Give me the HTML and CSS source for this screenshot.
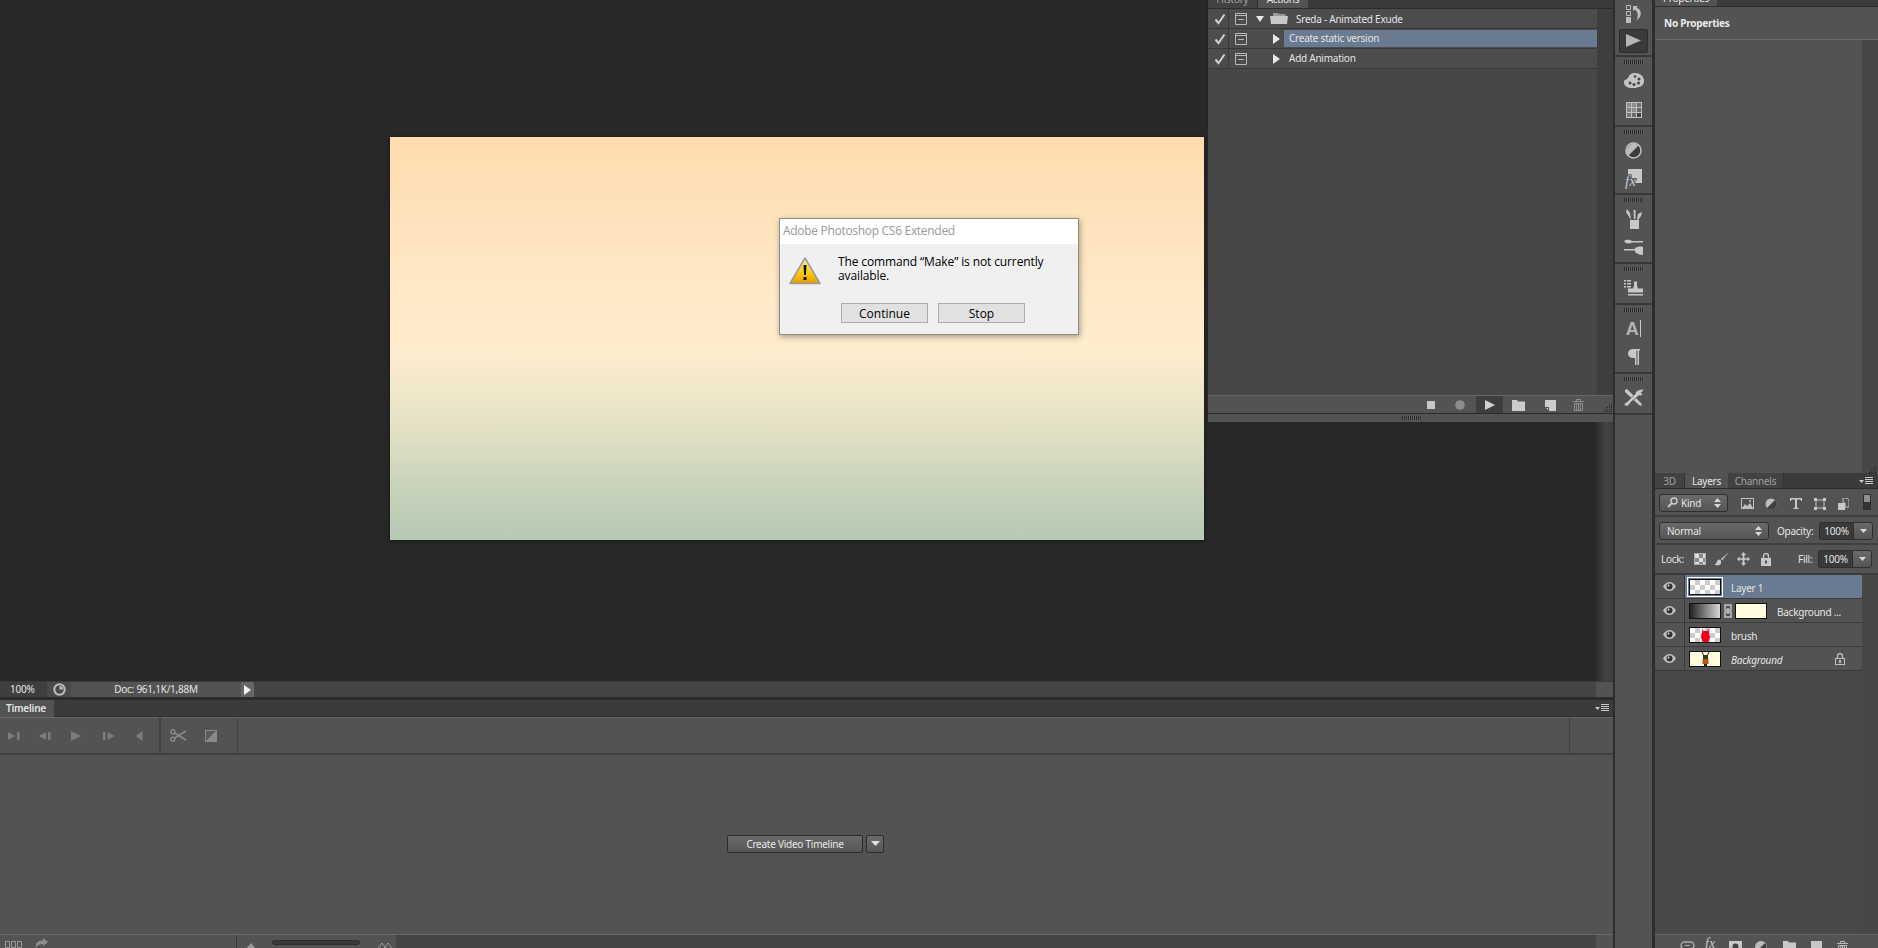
FILE: index.html
```html
<!DOCTYPE html>
<html lang="en">
<head>
<meta charset="utf-8">
<title>Adobe Photoshop CS6 Extended</title>
<link rel="stylesheet" href="styles.css">
</head>
<body>
<div class="app">
  <main class="main">
    <section class="canvas-row">
      <div class="canvas">
        <div class="artwork"></div>
      </div>
      <div class="vscroll"></div>

      <div class="actions-panel">
        <div class="tabs tabs-clipped">
          <div class="tab dim tab-history">History</div>
          <div class="tab active tab-actions">Actions</div>
        </div>
        <div class="actions-body">
          <div class="actions-list">
            <div class="a-row">
              <div class="a-check"><svg width="12" height="12" viewBox="0 0 12 12"><path d="M1.500 6.500 4.500 10 10.500 1.500" fill="none" stroke="#d0d0d0" stroke-width="2"/></svg></div>
              <div class="a-box"><svg width="12" height="12" viewBox="0 0 12 12"><path d="M.5 .5h11v11H.5zM.5 2.500h11M3 6.500h6" fill="none" stroke="#b8b8b8"/></svg></div>
              <div class="a-tri-set"><svg width="10" height="8" viewBox="0 0 10 8"><path d="M1 1h8L5 7z" fill="#e8e8e8"/></svg></div>
              <div class="a-folder"><svg width="19" height="11" viewBox="0 0 19 11"><path d="M3 0h5l1 1h6l1 2H3z" fill="#9a9a9a"/><path d="M0 3h18l-1 8H1z" fill="#c8c8c8"/></svg></div>
              <div class="a-name">Sreda - Animated Exude</div>
            </div>
            <div class="a-row">
              <div class="a-check"><svg width="12" height="12" viewBox="0 0 12 12"><path d="M1.500 6.500 4.500 10 10.500 1.500" fill="none" stroke="#d0d0d0" stroke-width="2"/></svg></div>
              <div class="a-box"><svg width="12" height="12" viewBox="0 0 12 12"><path d="M.5 .5h11v11H.5zM.5 2.500h11M3 6.500h6" fill="none" stroke="#b8b8b8"/></svg></div>
              <div class="a-tri-act"><svg width="7" height="10" viewBox="0 0 7 10"><path d="M0 0l7 5-7 5z" fill="#e8e8e8"/></svg></div>
              <div class="a-action selected">Create static version</div>
            </div>
            <div class="a-row">
              <div class="a-check"><svg width="12" height="12" viewBox="0 0 12 12"><path d="M1.500 6.500 4.500 10 10.500 1.500" fill="none" stroke="#d0d0d0" stroke-width="2"/></svg></div>
              <div class="a-box"><svg width="12" height="12" viewBox="0 0 12 12"><path d="M.5 .5h11v11H.5zM.5 2.500h11M3 6.500h6" fill="none" stroke="#b8b8b8"/></svg></div>
              <div class="a-tri-act"><svg width="7" height="10" viewBox="0 0 7 10"><path d="M0 0l7 5-7 5z" fill="#e8e8e8"/></svg></div>
              <div class="a-action">Add Animation</div>
            </div>
          </div>
          <div class="scroll-track"></div>
        </div>
        <div class="actions-bar">
          <span class="ab ab-stop"><svg width="8" height="8"><rect width="8" height="8" fill="#c8c8c8"/></svg></span>
          <span class="ab ab-rec"><svg width="10" height="10"><circle cx="5" cy="5" r="4.800" fill="#8c8c8c"/></svg></span>
          <span class="ab ab-play"><svg width="10" height="10" viewBox="0 0 10 10"><path d="M0 0l10 5-10 5z" fill="#d0d0d0"/></svg></span>
          <span class="ab ab-folder"><svg width="13" height="11" viewBox="0 0 13 11"><path d="M0 0h5l1 1.500h7V11H0z" fill="#cccccc"/></svg></span>
          <span class="ab ab-new"><svg width="11" height="11" viewBox="0 0 11 11"><path d="M0 0h11v11H4V7H0z" fill="#cccccc"/><path d="M1 8h2v2z" fill="#cccccc"/></svg></span>
          <span class="ab ab-trash"><svg width="11" height="12" viewBox="0 0 11 12"><path d="M0 2.500h11M3.500 2.500V.5h4v2M1.500 4.500h8V11.500h-8zM3.700 5v6M5.500 5v6M7.300 5v6" fill="none" stroke="#8e8e8e"/></svg></span>
          <span class="ab ab-grip"><svg width="9" height="9" viewBox="0 0 9 9"><path d="M8 0h1v1H8zM6 2h1v1H6zM8 2h1v1H8zM4 4h1v1H4zM6 4h1v1H6zM8 4h1v1H8zM2 6h1v1H2zM4 6h1v1H4zM6 6h1v1H6zM8 6h1v1H8zM0 8h1v1H0zM2 8h1v1H2zM4 8h1v1H4zM6 8h1v1H6zM8 8h1v1H8z" fill="#202020"/></svg></span>
        </div>
        <div class="actions-foot"><span class="grip"></span></div>
      </div>

      <div class="dialog">
        <div class="dialog-title">Adobe Photoshop CS6 Extended</div>
        <div class="dialog-body">
          <div class="dialog-msg">
            <svg class="warn" width="32" height="28" viewBox="0 0 32 28"><defs><linearGradient id="wg" x1="0" y1="0" x2="0" y2="1"><stop offset="0" stop-color="#fff3a8"/><stop offset=".6" stop-color="#fbc70c"/><stop offset="1" stop-color="#e69c00"/></linearGradient></defs><path d="M16 1 31 26.500H1z" fill="url(#wg)" stroke="#9a9a9a" stroke-width="1.500" stroke-linejoin="round"/><path d="M14.500 8h3l-.6 10h-1.800zM14.500 20h3v3h-3z" fill="#111"/></svg>
            <p class="dialog-text">The command “Make” is not currently available.</p>
          </div>
          <div class="dialog-btns">
            <button class="d-btn">Continue</button>
            <button class="d-btn">Stop</button>
          </div>
        </div>
      </div>
    </section>

    <section class="status">
      <div class="zoom-val">100%</div>
      <div class="hist-btn"><svg width="13" height="13" viewBox="0 0 13 13"><circle cx="6.500" cy="6.500" r="5.200" fill="none" stroke="#bdbdbd" stroke-width="2"/><path d="M6.500 6.500V3A3.500 3.500 0 0 1 10 6.500z" fill="#bdbdbd"/></svg></div>
      <div class="doc-field">Doc: 961,1K/1,88M</div>
      <div class="doc-arrow"><svg width="7" height="10" viewBox="0 0 7 10"><path d="M0 0l7 5-7 5z" fill="#efefef"/></svg></div>
      <div class="status-fill"></div>
      <div class="status-corner"></div>
    </section>

    <section class="timeline">
      <div class="tl-tabs"><div class="tl-tab">Timeline</div>
        <svg class="menu-ic" width="14" height="8" viewBox="0 0 14 8"><path d="M0 3h5L2.500 6z" fill="#c8c8c8"/><path d="M6 .5h8M6 2.500h8M6 4.500h8M6 6.500h8" stroke="#c8c8c8"/></svg>
      </div>
      <div class="tl-tools">
        <div class="tl-ctrl">
          <svg class="t1" width="12" height="10" viewBox="0 0 12 10"><path d="M0 1l7 4-7 4zM9 1h2.500v8H9z" fill="#7c7c7c"/></svg>
          <svg class="t2" width="12" height="10" viewBox="0 0 12 10"><path d="M7 1 0 5l7 4zM9 1h2.500v8H9z" fill="#7c7c7c"/></svg>
          <svg class="t3" width="10" height="10" viewBox="0 0 10 10"><path d="M0 0l10 5-10 5z" fill="#7c7c7c"/></svg>
          <svg class="t4" width="12" height="10" viewBox="0 0 12 10"><path d="M0 1h2.500v8H0zM4.500 1l7 4-7 4z" fill="#7c7c7c"/></svg>
          <svg class="t5" width="7" height="10" viewBox="0 0 7 10"><path d="M6.500 0v10L0 5z" fill="#7c7c7c"/></svg>
        </div>
        <div class="tl-cut">
          <svg class="t6" width="16" height="13" viewBox="0 0 16 13"><circle cx="2.800" cy="2.800" r="2" fill="none" stroke="#8a8a8a" stroke-width="1.400"/><circle cx="2.800" cy="10.200" r="2" fill="none" stroke="#8a8a8a" stroke-width="1.400"/><path d="M4.500 4 16 11M4.500 9 16 2" stroke="#8a8a8a" stroke-width="1.500"/></svg>
          <svg class="t7" width="12" height="12" viewBox="0 0 12 12"><rect x=".5" y=".5" width="11" height="11" fill="#5a5a5a" stroke="#8a8a8a"/><path d="M1 11 11 1v10z" fill="#8a8a8a"/></svg>
        </div>
        <div class="tl-space"></div>
        <div class="tl-end"></div>
      </div>
      <div class="tl-stage">
        <button class="video-btn">Create Video Timeline</button>
        <button class="video-arrow"><svg width="9" height="5" viewBox="0 0 9 5"><path d="M0 0h9L4.500 5z" fill="#e0e0e0"/></svg></button>
      </div>
      <div class="tl-bottom">
        <div class="tlb-left">
          <svg class="tb1" width="17" height="7" viewBox="0 0 17 7"><path d="M.5 .5h4v6h-4zM6.500 .5h4v6h-4zM12.500 .5h4v6h-4z" fill="none" stroke="#9a9a9a"/></svg>
          <svg class="tb2" width="13" height="10" viewBox="0 0 13 10"><path d="M8 0l5 4-5 4V6C5 6 2 7 1 10 0 5 3 2.500 8 2.500z" fill="#8e8e8e"/></svg>
        </div>
        <div class="tlb-zoom">
          <svg width="10" height="6" viewBox="0 0 10 6"><path d="M5 0l5 6H0z" fill="#9a9a9a"/></svg>
          <span class="tlb-slider"></span>
          <svg width="18" height="8" viewBox="0 0 18 8"><path d="M6 0l6 8H0zM12 0l6 8H6z" fill="none" stroke="#9a9a9a"/></svg>
        </div>
        <div class="status-fill"></div>
        <div class="status-corner"></div>
      </div>
    </section>
  </main>

  <nav class="dock">
    <div class="dock-group dock-first">
      <div class="dock-btn dock-btn-short"><svg width="16" height="18" viewBox="0 0 16 18"><path d="M.5 .5h4v4h-4zM.5 6.500h4v4h-4z" fill="none" stroke="#bdbdbd"/><rect y="12" width="5" height="6" fill="#bdbdbd"/><path d="M7 1h5l-1.500 1.500C14 4 16 7 14 12l-4 4c2-3 3-8-1-11.500L7 6z" fill="#bdbdbd"/></svg></div>
      <div class="dock-btn"><span class="dock-active"><svg width="15" height="13" viewBox="0 0 15 13"><path d="M0 0l15 6.500L0 13z" fill="#b4b4b4"/></svg></span></div>
    </div>
    <div class="dock-group dock-group-tall">
      <span class="grip"></span>
      <div class="dock-btn"><svg width="20" height="15" viewBox="0 0 20 15"><path d="M11 0c5 0 9 3 9 8s-5 7-11 7S0 13 0 9c0-3 3-2 4-4 1-3 3-5 7-5z" fill="#c4c4c4"/><circle cx="6" cy="10" r="1.500" fill="#444"/><circle cx="10" cy="11.500" r="1.500" fill="#444"/><circle cx="14.500" cy="10" r="1.500" fill="#444"/><circle cx="15" cy="6" r="1.500" fill="#444"/><circle cx="11" cy="3.500" r="1.300" fill="#444"/></svg></div>
      <div class="dock-btn"><svg width="16" height="16" viewBox="0 0 16 16"><rect width="16" height="16" fill="#c0c0c0"/><rect x="1" y="1" width="4" height="4" fill="#8c8c8c"/><rect x="6" y="1" width="4" height="4" fill="#8c8c8c"/><rect x="11" y="1" width="4" height="4" fill="#707070"/><rect x="1" y="6" width="4" height="4" fill="#808080"/><rect x="6" y="6" width="4" height="4" fill="#8c8c8c"/><rect x="11" y="6" width="4" height="4" fill="#666"/><rect x="1" y="11" width="4" height="4" fill="#777"/><rect x="6" y="11" width="4" height="4" fill="#6c6c6c"/><rect x="11" y="11" width="4" height="4" fill="#444"/></svg></div>
    </div>
    <div class="dock-group dock-group-short">
      <span class="grip"></span>
      <div class="dock-btn"><svg width="17" height="17" viewBox="0 0 17 17"><circle cx="8.500" cy="8.500" r="7.500" fill="#3c3c3c" stroke="#c0c0c0" stroke-width="1.500"/><path d="M3.300 13.700A7.400 7.400 0 0 1 13.700 3.300z" fill="#bcbcbc"/></svg></div>
      <div class="dock-btn"><svg width="17" height="20" viewBox="0 0 17 20"><path d="M3 0h14v14H9v-3H3z" fill="#c8c8c8"/><text x="0" y="17" class="fx-text">fx</text></svg></div>
    </div>
    <div class="dock-group">
      <span class="grip"></span>
      <div class="dock-btn"><svg width="17" height="20" viewBox="0 0 17 20"><path d="M5 11h9v9H5z" fill="#c8c8c8"/><path d="M6 11 1 3l1-3 3 4 1 7zM9 10 8.500 1 10.500 1 10.500 10zM12 11l1-6 4-2-1 4-3 4z" fill="#c8c8c8"/></svg></div>
      <div class="dock-btn"><svg width="19" height="16" viewBox="0 0 19 16"><path d="M0 2c3-2 6-1 8 0h11v1.500H8C6 5 2 5 0 2zM0 10h11V9c2-1 5-2 8-1l0 8c-3 0-6-1-8-3V11.500H0z" fill="#c8c8c8"/></svg></div>
    </div>
    <div class="dock-group">
      <span class="grip"></span>
      <div class="dock-btn"><svg width="19" height="16" viewBox="0 0 19 16"><path d="M0 0h2v1.500H0zM3 0h4v1.500H3zM0 3h2v1.500H0zM3 3h4v1.500H3zM0 6h2v1.500H0zM3 6h4v1.500H3z" fill="#c8c8c8"/><path d="M10 1.500h3v4l1 3h5v4H4v-4h5l1-3zM4 14h15v1.500H4z" fill="#c8c8c8"/></svg></div>
    </div>
    <div class="dock-group">
      <span class="grip"></span>
      <div class="dock-btn"><span class="dock-char">A</span><span class="dock-caret"></span></div>
      <div class="dock-btn"><svg width="12" height="16" viewBox="0 0 12 16"><path d="M12 0v1.500h-1V16H9.500V1.500h-1V16H7V9H5C2 9 0 7 0 4.500S2 0 5 0z" fill="#c8c8c8"/></svg></div>
    </div>
    <div class="dock-group">
      <span class="grip"></span>
      <div class="dock-btn"><svg width="20" height="18" viewBox="0 0 20 18"><path d="M1 1 3 0l14 14 1 3-3-1L1 3z" fill="#c8c8c8"/><path d="M15 1c2-1 4-1 5 0l-3 3 2 1c-1 2-3 2-4 1.500L7 13l-3 4H1l-1-2 4-3 7.500-7.500C11 3 13 1.500 15 1z" fill="#c8c8c8" stroke="#535353" stroke-width=".6"/></svg></div>
    </div>
    <div class="dock-group dock-last"></div>
  </nav>

  <aside class="side">
    <div class="tabs tabs-prop">
      <div class="tab active tab-prop">Properties</div>
    </div>
    <div class="prop-head">No Properties</div>
    <div class="prop-body">
      <div class="prop-content"></div>
      <div class="prop-scroll">
        <svg class="side-grip" width="9" height="7" viewBox="0 0 9 7"><path d="M8 0h1v1H8zM6 2h1v1H6zM8 2h1v1H8zM4 4h1v1H4zM6 4h1v1H6zM8 4h1v1H8zM2 6h1v1H2zM4 6h1v1H4zM6 6h1v1H6zM8 6h1v1H8z" fill="#202020"/></svg>
      </div>
    </div>
    <div class="layers">
      <div class="tabs tabs-layers">
        <div class="tab dim tab-3d">3D</div>
        <div class="tab active tab-layers">Layers</div>
        <div class="tab dim tab-channels">Channels</div>
        <svg class="menu-ic menu-layers" width="14" height="8" viewBox="0 0 14 8"><path d="M0 3h5L2.500 6z" fill="#c8c8c8"/><path d="M6 .5h8M6 2.500h8M6 4.500h8M6 6.500h8" stroke="#c8c8c8"/></svg>
      </div>
      <div class="ly-row ly-filter">
        <div class="select sel-kind">
          <svg width="11" height="11" viewBox="0 0 11 11"><circle cx="7" cy="4" r="3" fill="none" stroke="#ccc" stroke-width="1.400"/><path d="M5 6 1 10" stroke="#ccc" stroke-width="1.800"/></svg>
          <span class="sel-label">Kind</span>
          <svg class="updown" width="7" height="10" viewBox="0 0 7 10"><path d="M3.500 0 7 4H0zM3.500 10 0 6h7z" fill="#d8d8d8"/></svg>
        </div>
        <svg class="f-ic f1" width="13" height="11" viewBox="0 0 13 11"><rect x=".5" y=".5" width="12" height="10" fill="#505050" stroke="#c0c0c0"/><path d="M1 10l3-4 2 2 3-3 3 5z" fill="#c0c0c0"/><circle cx="9" cy="3" r="1" fill="#c0c0c0"/></svg>
        <svg class="f-ic f2" width="12" height="12" viewBox="0 0 12 12"><circle cx="6" cy="6" r="5.500" fill="#bcbcbc"/><path d="M9.900 2.100A5.500 5.500 0 0 1 2.100 9.900z" fill="#404040"/></svg>
        <svg class="f-ic f3" width="12" height="11" viewBox="0 0 12 11"><path d="M0 0h12v3h-1l-.5-1.500H7V9.500l1.500.5v1h-5v-1L5 9.500V1.500H1.500L1 3H0z" fill="#c8c8c8"/></svg>
        <svg class="f-ic f4" width="12" height="12" viewBox="0 0 12 12"><path d="M2 2h8v8H2z" fill="none" stroke="#c0c0c0"/><path d="M0 0h3v3H0zM9 0h3v3H9zM0 9h3v3H0zM9 9h3v3H9z" fill="#c8c8c8"/></svg>
        <svg class="f-ic f5" width="11" height="12" viewBox="0 0 11 12"><path d="M5 0h4l2 2v7H7V5H5z" fill="none" stroke="#c0c0c0"/><rect y="5" width="7" height="7" fill="#c8c8c8"/></svg>
        <div class="f-toggle"><span class="f-toggle-on"></span><span class="f-toggle-off"></span></div>
      </div>
      <div class="ly-row ly-blend">
        <div class="select sel-blend"><span class="sel-label">Normal</span><svg class="updown" width="7" height="10" viewBox="0 0 7 10"><path d="M3.500 0 7 4H0zM3.500 10 0 6h7z" fill="#d8d8d8"/></svg></div>
        <span class="ly-label lbl-op">Opacity:</span>
        <div class="pct"><span class="pct-val">100%</span><span class="pct-arrow"><svg width="7" height="4" viewBox="0 0 7 4"><path d="M0 0h7L3.500 4z" fill="#d8d8d8"/></svg></span></div>
      </div>
      <div class="ly-row ly-lock">
        <span class="ly-label lbl-lock">Lock:</span>
        <span class="lk lk1"></span>
        <svg class="lk2" width="15" height="14" viewBox="0 0 15 14"><path d="M15 0 7 7l1 1.500zM6 7.500c-2 0-3 1-3.500 3-.3 1-1 1.500-2.500 1.500 2 2 6 2 7-.5.4-1.500 0-3-1-4z" fill="#c8c8c8"/></svg>
        <svg class="lk3" width="13" height="14" viewBox="0 0 13 14"><path d="M6.500 0l2.500 3H7.500v3.200H10.500V4.500L13 7l-2.500 2.500V7.800H7.500v3.200H9l-2.500 3-2.500-3h1.500V7.800H2.500v1.700L0 7l2.500-2.500v1.700h3V3H4z" fill="#c8c8c8"/></svg>
        <svg class="lk4" width="10" height="13" viewBox="0 0 10 13"><rect y="5" width="10" height="8" fill="#c8c8c8"/><path d="M2.500 5V3a2.500 2.500 0 0 1 5 0v2" fill="none" stroke="#c8c8c8" stroke-width="1.400"/><rect x="4" y="7.500" width="2" height="3" fill="#555"/></svg>
        <span class="ly-label lbl-fill">Fill:</span>
        <div class="pct"><span class="pct-val">100%</span><span class="pct-arrow"><svg width="7" height="4" viewBox="0 0 7 4"><path d="M0 0h7L3.500 4z" fill="#d8d8d8"/></svg></span></div>
      </div>
      <div class="ly-list">
        <div class="ly-rows">
          <div class="layer layer-sel">
            <div class="eye"><svg width="13" height="9" viewBox="0 0 13 9"><path d="M0 4.500C2 1.500 4 0 6.500 0S11 1.500 13 4.500C11 7.500 9 9 6.500 9S2 7.500 0 4.500z" fill="#c0c0c0"/><circle cx="6.500" cy="4.500" r="3" fill="#333"/><circle cx="5.500" cy="3.500" r="1" fill="#ddd"/></svg></div>
            <div class="thumb checker thumb-framed"></div>
            <div class="l-name">Layer 1</div>
          </div>
          <div class="layer">
            <div class="eye"><svg width="13" height="9" viewBox="0 0 13 9"><path d="M0 4.500C2 1.500 4 0 6.500 0S11 1.500 13 4.500C11 7.500 9 9 6.500 9S2 7.500 0 4.500z" fill="#c0c0c0"/><circle cx="6.500" cy="4.500" r="3" fill="#333"/><circle cx="5.500" cy="3.500" r="1" fill="#ddd"/></svg></div>
            <div class="thumb thumb-grad"></div>
            <svg class="chain" width="8" height="14" viewBox="0 0 8 14"><path d="M1 1h6v5H1zM1 8h6v5H1z" fill="none" stroke="#c0c0c0" stroke-width="1.600"/><path d="M4 4v6" stroke="#c0c0c0" stroke-width="1.600"/></svg>
            <div class="thumb thumb-cream"></div>
            <div class="l-name l-name-mask">Background ...</div>
          </div>
          <div class="layer">
            <div class="eye"><svg width="13" height="9" viewBox="0 0 13 9"><path d="M0 4.500C2 1.500 4 0 6.500 0S11 1.500 13 4.500C11 7.500 9 9 6.500 9S2 7.500 0 4.500z" fill="#c0c0c0"/><circle cx="6.500" cy="4.500" r="3" fill="#333"/><circle cx="5.500" cy="3.500" r="1" fill="#ddd"/></svg></div>
            <div class="thumb checker thumb-center"><svg width="9" height="14" viewBox="0 0 9 14"><path d="M1.500 0 2.500 3h4L7.500 0 8 5 9 9 7.500 14h-6L0 9 1 5z" fill="#f0001c"/></svg></div>
            <div class="l-name">brush</div>
          </div>
          <div class="layer">
            <div class="eye"><svg width="13" height="9" viewBox="0 0 13 9"><path d="M0 4.500C2 1.500 4 0 6.500 0S11 1.500 13 4.500C11 7.500 9 9 6.500 9S2 7.500 0 4.500z" fill="#c0c0c0"/><circle cx="6.500" cy="4.500" r="3" fill="#333"/><circle cx="5.500" cy="3.500" r="1" fill="#ddd"/></svg></div>
            <div class="thumb thumb-cream thumb-center"><svg width="9" height="14" viewBox="0 0 9 14"><path d="M1 0 2.500 3M8 0 6.500 3" stroke="#222" stroke-width="1"/><rect x="2" y="3" width="5" height="4" fill="#2f3a24"/><rect x="1.500" y="7" width="6" height="5" fill="#b5541c"/><rect x="3" y="12" width="3" height="2" fill="#222"/></svg></div>
            <div class="l-name l-italic">Background</div>
            <svg class="l-lock" width="10" height="12" viewBox="0 0 10 12"><path d="M2.500 5V3a2.500 2.500 0 0 1 5 0v2" fill="none" stroke="#c0c0c0" stroke-width="1.300"/><path d="M0 5h10v7H0zM1 6v5h8V6z" fill="#c0c0c0" fill-rule="evenodd"/><rect x="4" y="7" width="2" height="3" fill="#c0c0c0"/></svg>
          </div>
        </div>
        <div class="prop-scroll ly-scroll"></div>
      </div>
      <div class="ly-bar">
        <svg class="lb1" width="15" height="9" viewBox="0 0 15 9"><rect x="1" y="1" width="13" height="7" rx="3.500" fill="none" stroke="#a8a8a8" stroke-width="1.500"/><path d="M5 4.500h5" stroke="#a8a8a8"/></svg>
        <span class="lb-fx">fx</span>
        <svg class="lb3" width="13" height="11" viewBox="0 0 13 11"><rect width="13" height="11" fill="#c8c8c8"/><circle cx="6.500" cy="5.500" r="3" fill="#444"/></svg>
        <svg class="lb4" width="12" height="12" viewBox="0 0 12 12"><circle cx="6" cy="6" r="6" fill="#bcbcbc"/><path d="M10 2A5.500 5.500 0 0 1 2 10z" fill="#404040"/></svg>
        <svg class="lb5" width="13" height="11" viewBox="0 0 13 11"><path d="M0 0h5l1 1.500h7V11H0z" fill="#c8c8c8"/></svg>
        <svg class="lb6" width="11" height="11" viewBox="0 0 11 11"><path d="M0 0h11v11H4V7H0z" fill="#c8c8c8"/></svg>
        <svg class="lb7" width="11" height="11" viewBox="0 0 11 11"><path d="M0 2.500h11M3.500 2.500V.5h4v2M1.500 4.500h8V11h-8zM3.700 5v6M5.500 5v6M7.300 5v6" fill="none" stroke="#b8b8b8"/></svg>
      </div>
    </div>
  </aside>
</div>
</body>
</html>
```

FILE: styles.css
```css
* { box-sizing: border-box; }
html, body { margin: 0; padding: 0; height: 948px; overflow: hidden; background: #282828; }
body { font-family: "Noto Sans", "Liberation Sans", sans-serif; font-size: 10px; letter-spacing: -.25px; color: #e4e4e4; }
p { margin: 0; }
button { font: inherit; padding: 0; letter-spacing: inherit; }
svg { display: block; flex: none; }

.app { display: flex; width: 1878px; height: 948px; overflow: hidden; }
.main { width: 1613px; height: 948px; display: flex; flex-direction: column; flex: none; }

/* canvas */
.canvas-row { position: relative; height: 681px; display: flex; flex: none; }
.canvas { width: 1596px; background: #282828; padding: 137px 0 0 390px; flex: none; }
.artwork { width: 814px; height: 403px; background: linear-gradient(180deg, #fedcaf 0%, #ffeccd 48%, #fdeccd 54%, #e4e2c6 72%, #c6d2ba 88%, #b7c9b4 100%); box-shadow: 0 1px 4px rgba(0,0,0,.5); }
.vscroll { width: 17px; background: linear-gradient(90deg, #2c2c2c, #444 60%, #3e3e3e); flex: none; }

/* floating actions panel */
.actions-panel { position: absolute; left: 1208px; top: 0; width: 405px; height: 422px; background: #474747; display: flex; flex-direction: column; box-shadow: -1px 0 0 #242424; }
.tabs { display: flex; background: #3b3b3b; border-bottom: 1px solid #2c2c2c; flex: none; position: relative; overflow: hidden; }
.tab { height: 17px; line-height: 16px; text-align: center; flex: none; font-size: 10px; }
.tab.active { background: #535353; color: #e8e8e8; }
.tab.dim { color: #a0a0a0; background: #424242; border-right: 1px solid #333; }
.tabs-clipped { height: 9px; }
.tabs-clipped .tab { margin-top: -9px; }
.tab-history { width: 50px; }
.tab-actions { width: 50px; }
.actions-body { flex: 1; display: flex; min-height: 0; }
.actions-list { width: 389px; flex: none; background: #474747; }
.scroll-track { flex: 1; background: #3e3e3e; }
.a-row { height: 20px; display: flex; align-items: center; border-bottom: 1px solid #383838; background: #4c4c4c; }
.a-check { width: 21px; height: 100%; display: flex; align-items: center; justify-content: center; padding-left: 3px; border-right: 1px solid #383838; flex: none; }
.a-box { margin-left: 6px; width: 12px; flex: none; }
.a-tri-set { margin-left: 8px; width: 10px; flex: none; }
.a-folder { margin-left: 5px; width: 19px; flex: none; }
.a-name { margin-left: 7px; }
.a-tri-act { margin-left: 26px; width: 7px; flex: none; }
.a-action { margin-left: 4px; padding-left: 5px; flex: 1; height: 17px; line-height: 17px; }
.a-action.selected { background: #697a91; }
.actions-bar { height: 19px; flex: none; border-top: 1px solid #666; background: #535353; position: relative; border-bottom: 1px solid #2a2a2a; }
.ab { position: absolute; top: 4px; display: block; }
.ab-stop { left: 219px; top: 5px; }
.ab-rec { left: 247px; }
.ab-play { left: 268px; top: 0; width: 27px; height: 17px; background: #3e3e3e; display: flex; align-items: center; justify-content: center; }
.ab-folder { left: 304px; }
.ab-new { left: 337px; }
.ab-trash { left: 365px; top: 3px; }
.ab-grip { left: 395px; top: 7px; }
.actions-foot { height: 8px; flex: none; background: #535353; display: flex; justify-content: center; align-items: center; padding-left: 3px; }
.grip { display: block; width: 20px; height: 4px; background: repeating-linear-gradient(90deg, #2c2c2c 0 1px, #5e5e5e 1px 2px); flex: none; }

/* dialog */
.dialog { position: absolute; left: 779px; top: 218px; width: 300px; height: 117px; border: 1px solid #8d8d80; background: #f0f0f0; box-shadow: 1px 2px 6px rgba(0,0,0,.35); color: #000; font-family: "Open Sans", "Liberation Sans", sans-serif; letter-spacing: 0; display: flex; flex-direction: column; }
.dialog-title { height: 25px; line-height: 24px; background: #fff; color: #999; font-size: 12px; letter-spacing: -.3px; padding-left: 3px; flex: none; }
.dialog-body { flex: 1; padding: 13px 0 0 9px; }
.dialog-msg { display: flex; gap: 17px; height: 46px; }
.dialog-text { font-size: 12px; letter-spacing: -.12px; line-height: 14px; width: 215px; margin-top: -2px; }
.dialog-btns { display: flex; gap: 10px; padding-left: 52px; }
.d-btn { width: 87px; height: 20px; background: #e1e1e1; border: 1px solid #adadad; font-size: 12px; font-family: "Open Sans", "Liberation Sans", sans-serif; letter-spacing: 0; color: #000; }

/* status bar */
.status { height: 16px; display: flex; flex: none; background: #444; border-top: 1px solid #3a3a3a; }
.zoom-val { width: 47px; line-height: 14px; padding-left: 10px; background: #3f3f3f; }
.hist-btn { width: 24px; background: #4a4a4a; display: flex; align-items: center; justify-content: center; }
.doc-field { width: 170px; text-align: center; line-height: 15px; background: #535353; }
.doc-arrow { width: 13px; background: #666; display: flex; align-items: center; justify-content: center; }
.status-fill { flex: 1; background: #444; }
.status-corner { width: 17px; background: #535353; flex: none; }

/* timeline */
.timeline { flex: 1; display: flex; flex-direction: column; border-top: 3px solid #2b2b2b; min-height: 0; }
.tl-tabs { height: 17px; background: #3b3b3b; border-bottom: 1px solid #2c2c2c; display: flex; justify-content: space-between; align-items: center; padding-right: 4px; flex: none; }
.tl-tab { width: 54px; height: 17px; line-height: 17px; padding-left: 6px; background: #535353; font-weight: 600; }
.tl-tools { height: 38px; background: #535353; border-top: 1px solid #6a6a6a; border-bottom: 2px solid #3f3f3f; display: flex; flex: none; }
.tl-ctrl { width: 161px; display: flex; align-items: center; padding-left: 8px; border-right: 2px solid #404040; }
.tl-ctrl .t2 { margin-left: 19px; }
.tl-ctrl .t3 { margin-left: 20px; }
.tl-ctrl .t4 { margin-left: 22px; }
.tl-ctrl .t5 { margin-left: 21px; }
.tl-cut { width: 77px; display: flex; align-items: center; padding-left: 9px; gap: 19px; border-right: 1px solid #404040; }
.tl-space { flex: 1; }
.tl-end { width: 44px; border-left: 1px solid #404040; }
.tl-stage { flex: 1; background: #535353; display: flex; align-items: center; justify-content: flex-start; padding: 0 0 0 727px; gap: 3px; min-height: 0; }
.video-btn { width: 136px; height: 18px; border: 1px solid #2d2d2d; border-radius: 2px; background: linear-gradient(180deg, #6a6a6a, #565656); color: #e8e8e8; font-size: 10px; font-family: inherit; margin-top: -2px; }
.video-arrow { width: 18px; height: 18px; border: 1px solid #2d2d2d; border-radius: 2px; background: linear-gradient(180deg, #6a6a6a, #565656); display: flex; align-items: center; justify-content: center; margin-top: -2px; }
.tl-bottom { height: 14px; flex: none; display: flex; border-top: 1px solid #6a6a6a; background: #444; }
.tlb-left { width: 237px; background: #535353; display: flex; gap: 13px; padding: 6px 0 0 5px; border-right: 1px solid #3c3c3c; flex: none; }
.tlb-left .tb2 { margin-top: -3px; }
.tlb-zoom { width: 159px; background: #535353; flex: none; display: flex; align-items: flex-start; padding: 8px 0 0 9px; gap: 16px; }
.tlb-slider { display: block; width: 88px; height: 5px; margin-top: -3px; border-radius: 3px; background: #3a3a3a; border: 1px solid #2d2d2d; }

/* dock */
.dock { width: 42px; flex: none; background: #535353; border-left: 2px solid #2d2d2d; border-right: 3px solid #2d2d2d; display: flex; flex-direction: column; }
.dock-group { border-bottom: 2px solid #383838; display: flex; flex-direction: column; align-items: center; padding: 1px 0; flex: none; }
.dock-group .grip { margin-top: 2px; margin-bottom: 2px; }
.dock-first { padding: 0; }
.dock-group-short { padding-bottom: 0; }
.dock-last { border-bottom: 0; flex: 1; padding: 0; }
.dock-btn { height: 29px; width: 100%; display: flex; align-items: center; justify-content: center; flex: none; }
.dock-btn + .dock-btn { height: 28px; }
.dock-group-tall .dock-btn + .dock-btn, .dock-first .dock-btn + .dock-btn { height: 29px; }
.dock-btn-short { height: 26px; padding-top: 1px; }
.dock-active { width: 29px; height: 24px; background: #3a3a3a; border: 1px solid #2d2d2d; border-radius: 2px; display: flex; align-items: center; justify-content: center; }
.fx-text { font-family: "Liberation Serif", serif; font-style: italic; font-size: 15px; letter-spacing: 0; fill: #c8c8c8; stroke: #535353; stroke-width: 2px; paint-order: stroke; }
.dock-char { font-size: 18px; font-weight: 600; color: #b4b4b4; font-family: "Liberation Sans", sans-serif; line-height: 1; }
.dock-caret { display: block; width: 1px; height: 17px; background: #c8c8c8; margin-left: 2px; }

/* right side */
.side { flex: 1; display: flex; flex-direction: column; background: #535353; min-width: 0; }
.tabs-prop { height: 7px; }
.tab-prop { width: 62px; margin-top: -10px; }
.prop-head { height: 33px; line-height: 33px; padding-left: 9px; font-weight: 700; color: #eaeaea; border-bottom: 1px solid #6a6a6a; flex: none; }
.prop-body { height: 433px; display: flex; flex: none; }
.prop-content { width: 207px; flex: none; background: #535353; }
.prop-scroll { flex: 1; background: #474747; position: relative; }
.side-grip { position: absolute; right: 2px; bottom: 0; }

.layers { flex: 1; display: flex; flex-direction: column; min-height: 0; }
.tabs-layers { height: 16px; align-items: stretch; }
.tabs-layers .tab { height: 16px; line-height: 17px; }
.tab-3d { width: 30px; }
.tab-layers { width: 43px; }
.tab-channels { width: 56px; }
.menu-layers { position: absolute; right: 5px; top: 4px; }
.ly-row { display: flex; align-items: center; border-bottom: 1px solid #3f3f3f; flex: none; position: relative; box-shadow: inset 0 -1px 0 #3f3f3f; }
.ly-filter { height: 28px; padding-left: 4px; }
.ly-blend { height: 28px; padding-left: 4px; }
.ly-lock { height: 30px; padding-left: 6px; border-bottom: 2px solid #3a3a3a; box-shadow: none; }
.select { height: 18px; border: 1px solid #2f2f2f; border-radius: 3px; background: linear-gradient(180deg, #6a6a6a, #555); display: flex; align-items: center; padding: 0 6px 0 7px; flex: none; }
.sel-kind { width: 69px; gap: 3px; }
.sel-blend { width: 110px; }
.sel-label { flex: 1; color: #e4e4e4; }
.f-ic { position: absolute; top: 9px; }
.f1 { left: 86px; }
.f2 { left: 110px; }
.f3 { left: 135px; }
.f4 { left: 159px; }
.f5 { left: 183px; }
.f-toggle { position: absolute; left: 208px; top: 5px; width: 8px; height: 16px; border: 1px solid #2f2f2f; display: flex; flex-direction: column; }
.f-toggle-on { flex: 1; background: #8f8f8f; }
.f-toggle-off { flex: 1; background: #333; }
.ly-label { color: #e4e4e4; flex: none; }
.lbl-op { margin-left: 8px; width: 42px; }
.pct { display: flex; width: 54px; height: 18px; flex: none; }
.pct-val { width: 34px; background: #3a3a3a; border: 1px solid #2f2f2f; border-right: 0; line-height: 16px; text-align: center; border-radius: 3px 0 0 3px; }
.pct-arrow { width: 20px; background: linear-gradient(180deg, #6a6a6a, #555); border: 1px solid #2f2f2f; border-radius: 0 3px 3px 0; display: flex; align-items: center; justify-content: center; }
.lbl-lock { width: 27px; }
.lk { display: block; width: 12px; height: 12px; margin-left: 6px; background: conic-gradient(#888 25%, #ddd 0 50%, #888 0 75%, #ddd 0) 0 0 / 8px 8px; border: 1px solid #aaa; flex: none; }
.lk2 { margin-left: 8px; }
.lk3 { margin-left: 8px; }
.lk4 { margin-left: 11px; }
.lbl-fill { margin-left: 27px; width: 20px; }

.ly-list { flex: 1; display: flex; min-height: 0; }
.ly-rows { width: 207px; flex: none; background: #484848; }
.ly-scroll { background: #474747; }
.layer { height: 24px; display: flex; align-items: center; background: #535353; border-bottom: 1px solid #3a3a3a; position: relative; padding-left: 34px; }
.layer-sel { background: #697a91; }
.eye { position: absolute; left: 0; top: 0; width: 30px; height: 100%; border-right: 1px solid #3a3a3a; display: flex; align-items: center; justify-content: center; background: #535353; }
.thumb { width: 32px; height: 16px; flex: none; border: 1px solid #111; }
.checker { background: conic-gradient(#ccc 25%, #fff 0 50%, #ccc 0 75%, #fff 0) 0 0 / 10px 10px; }
.thumb-framed { outline: 1px solid #fff; outline-offset: 1px; }
.thumb-grad { background: linear-gradient(90deg, #222, #d8d8d8); }
.thumb-cream { background: #fffbdf; }
.thumb-center { display: flex; align-items: center; justify-content: center; overflow: hidden; }
.chain { margin: 0 3px; }
.l-name { margin-left: 10px; padding-top: 2px; font-size: 10px; color: #e4e4e4; }
.l-italic { font-style: italic; }
.l-lock { position: absolute; left: 180px; top: 6px; }
.ly-bar { height: 14px; flex: none; background: #535353; border-top: 1px solid #666; display: flex; position: relative; overflow: hidden; }
.ly-bar svg { position: absolute; top: 6px; }
.lb1 { left: 25px; }
.lb-fx { position: absolute; left: 50px; top: 2px; font-family: "Liberation Serif", serif; font-style: italic; font-size: 14px; letter-spacing: 0; color: #c8c8c8; line-height: 14px; }
.lb3 { left: 74px; }
.lb4 { left: 100px; }
.lb5 { left: 128px; }
.lb6 { left: 156px; }
.lb7 { left: 182px; }
```
